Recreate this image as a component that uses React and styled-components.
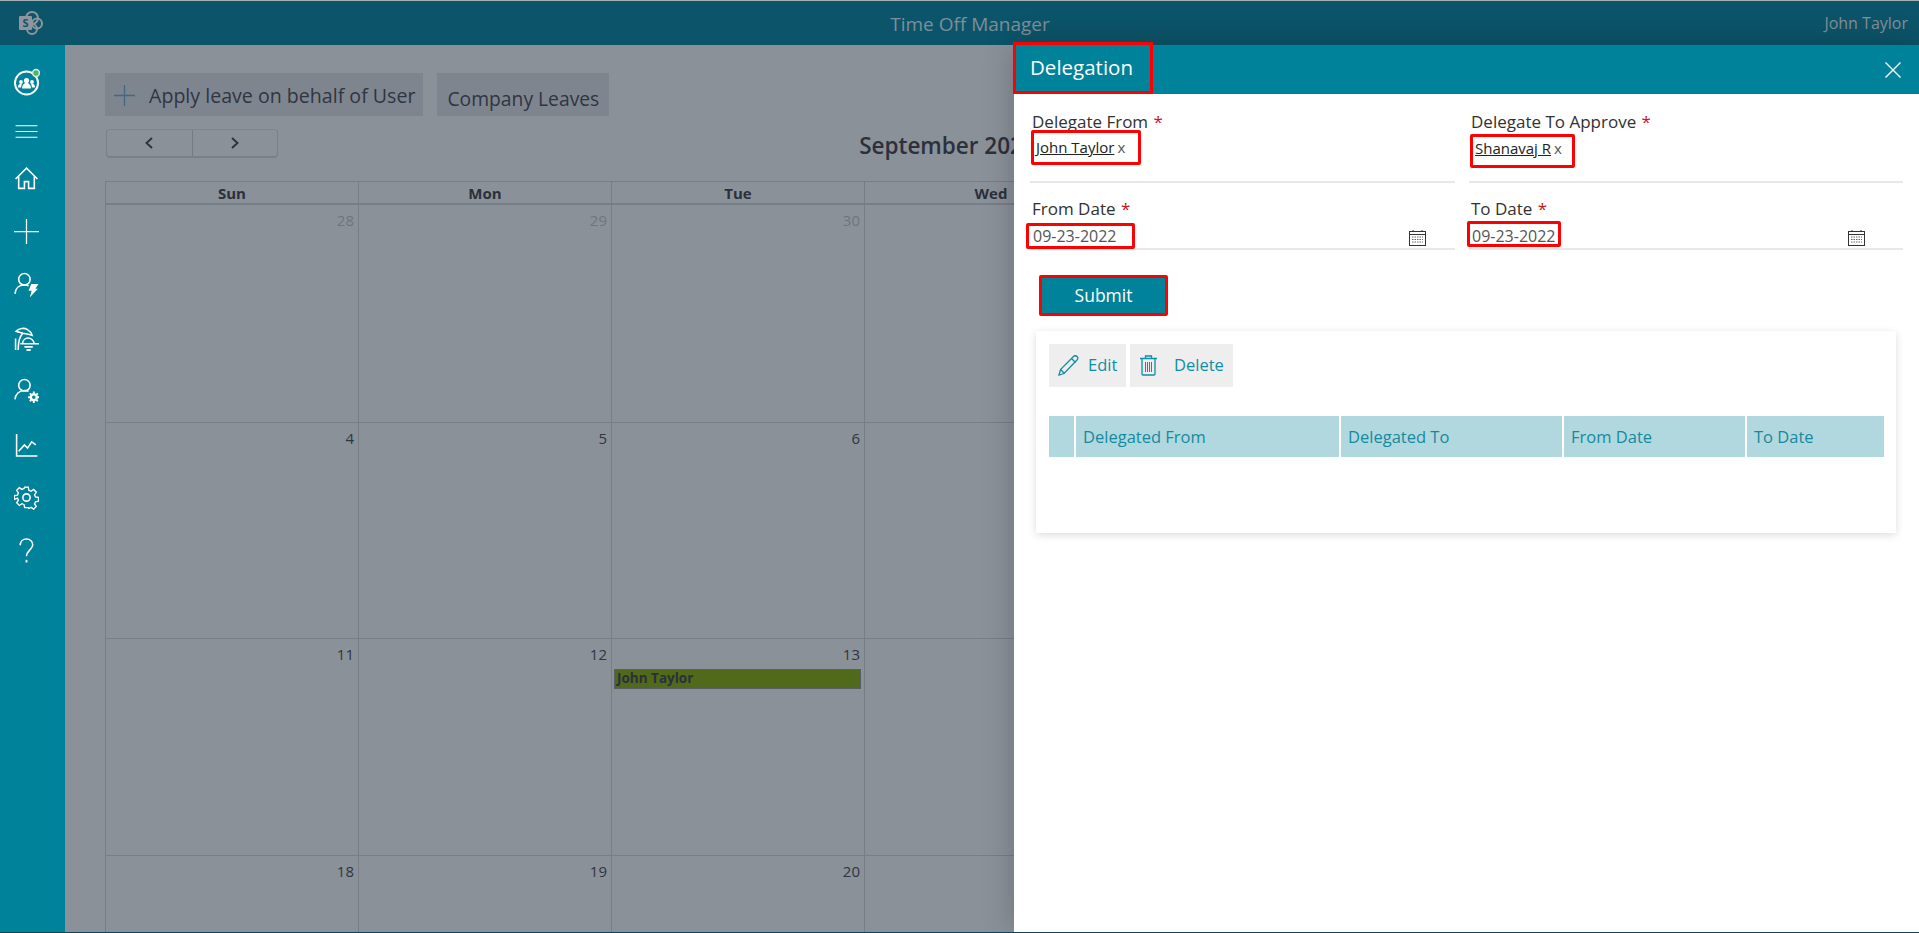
import React from 'react';
import styled, { createGlobalStyle } from 'styled-components';

const GlobalStyle = createGlobalStyle`
  html, body {
    margin: 0;
    padding: 0;
    height: 100%;
    overflow: hidden;
    background: #8b9199;
    font-family: 'Open Sans', 'Noto Sans', 'Liberation Sans', sans-serif;
  }
  * { box-sizing: border-box; }
`;

const Shell = styled.div`
  position: relative;
  height: 933px;
  display: flex;
  flex-direction: column;
  overflow: hidden;
  border-top: 1px solid #9fb1b4;
  border-bottom: 1px solid #0b4352;
`;

const TopBar = styled.header`
  flex: 0 0 44px;
  display: grid;
  grid-template-columns: 1fr auto 1fr;
  align-items: center;
  background: #0c5469;
  padding: 0 11px 0 18px;
`;

const AppTitle = styled.div`
  margin: 1px 0 0 14px;
  font-size: 19px;
  color: #7d8f99;
`;

const UserName = styled.div`
  justify-self: end;
  font-size: 16px;
  color: #858f98;
`;

const Body = styled.div`
  flex: 1;
  display: flex;
  min-height: 0;
`;

const SideNav = styled.nav`
  flex: 0 0 65px;
  display: flex;
  flex-direction: column;
  align-items: center;
  padding: 17px 12px 0 0;
  background: #00829a;
`;

const NavItem = styled.div`
  flex: 0 0 40px;
  margin-top: ${(p) => p.$gap}px;
  display: flex;
  align-items: center;
  justify-content: center;
`;

const Main = styled.main`
  flex: 1;
  min-width: 0;
  padding: 28px 0 0 40px;
  color: #2b303c;
`;

const Toolbar = styled.div`
  display: flex;
  gap: 14px;
`;

const ToolButton = styled.div`
  height: 43px;
  display: flex;
  align-items: center;
  padding: ${(p) => (p.$icon ? '2px 8px 0 9px' : '7px 10px 0 10px')};
  gap: 14px;
  background: #7f858f;
  font-size: ${(p) => (p.$icon ? 19.6 : 19.3)}px;
  color: #2f3542;
  white-space: nowrap;
`;

const NavRow = styled.div`
  width: 1685px;
  height: 29px;
  margin-top: 13px;
  display: grid;
  grid-template-columns: 1fr auto 1fr;
  align-items: start;
`;

const Pager = styled.div`
  width: 172px;
  height: 29px;
  margin-left: 1px;
  display: flex;
  border: 1px solid #7a808a;
  border-bottom-width: 2px;
  border-top-color: #80868f;
  border-radius: 4px;
`;

const PagerCell = styled.div`
  flex: 1;
  display: flex;
  align-items: center;
  justify-content: center;
  & + & { border-left: 1px solid #757b85; }
`;

const MonthTitle = styled.div`
  font-size: 22.5px;
  font-weight: 600;
  line-height: 34px;
  color: #2b303c;
  white-space: nowrap;
`;

const Calendar = styled.div`
  width: 1771px;
  margin-top: 23px;
  border-top: 1px solid #777e87;
  border-left: 1px solid #777e87;
`;

const HeadRow = styled.div`
  display: grid;
  grid-template-columns: repeat(7, 253px);
  height: 23px;
  border-bottom: 2px solid #777e87;
`;

const HeadCell = styled.div`
  border-right: 1px solid #777e87;
  text-align: center;
  font-size: 15px;
  font-weight: 700;
  line-height: 23px;
  color: #2b303c;
`;

const WeekRow = styled.div`
  display: grid;
  grid-template-columns: repeat(7, 253px);
  height: ${(p) => p.$height}px;
  border-bottom: 1px solid #777e87;
`;

const DayCell = styled.div`
  border-right: 1px solid #777e87;
  padding: 6px 3px 0 2px;
`;

const DayNumber = styled.div`
  text-align: right;
  padding-right: 1px;
  font-size: 15px;
  line-height: 18px;
  color: ${(p) => (p.$muted ? '#6f757e' : '#2f3542')};
`;

const LeaveEvent = styled.div`
  height: 20px;
  margin-top: 6px;
  padding-left: 2px;
  background: #50691a;
  border: 1px solid #565f63;
  font-size: 13.5px;
  font-weight: 700;
  line-height: 17px;
  color: #2b303c;
`;

const Panel = styled.aside`
  position: absolute;
  top: 44px;
  right: 0;
  bottom: 0;
  width: 905px;
  background: #fff;
  box-shadow: 0 0 30px rgba(0, 0, 0, 0.22);
`;

const PanelHeader = styled.div`
  height: 49px;
  display: flex;
  align-items: center;
  justify-content: space-between;
  background: #00829a;
  padding-right: 18px;
`;

const PanelTitle = styled.div`
  height: 52px;
  width: 140px;
  margin: -3px 0 0 -1px;
  padding: 0 0 2px 14px;
  display: flex;
  align-items: center;
  border: 3px solid #f00;
  font-size: 20.5px;
  color: #fff;
`;

const FormGrid = styled.div`
  display: grid;
  grid-template-columns: 425px 434px;
  column-gap: 14px;
  padding: 17px 0 0 16px;
`;

const Field = styled.div`
  min-width: 0;
`;

const Label = styled.div`
  margin-top: ${(p) => p.$top || 0}px;
  padding-left: 2px;
  font-size: 17px;
  line-height: 22px;
  color: #323130;
  span { margin-left: 1px; color: #c81414; }
`;

const PickerBox = styled.div`
  height: ${(p) => p.$height}px;
  border-bottom: 2px solid #e8e8e8;
  display: flex;
  align-items: flex-start;
  justify-content: space-between;
`;

const Highlight = styled.div`
  border: 3px solid #f00;
  border-radius: 2px;
  width: ${(p) => p.$w}px;
  height: ${(p) => p.$h}px;
  margin: ${(p) => p.$m};
  padding-left: ${(p) => p.$pl}px;
  font-size: ${(p) => p.$fs || 15}px;
  line-height: ${(p) => p.$lh}px;
  color: #555;
  white-space: nowrap;
`;

const PersonName = styled.span`
  text-decoration: underline;
  margin-right: 3px;
  color: #222;
`;

const CalendarGlyph = styled.div`
  margin: ${(p) => p.$m};
  display: flex;
`;

const SubmitWrap = styled.div`
  width: 129px;
  height: 41px;
  margin: 25px 0 0 25px;
  padding-bottom: 2px;
  border: 3px solid #f00;
  border-radius: 2px;
  background: #00829a;
  color: #fff;
  font-size: 17.5px;
  display: flex;
  align-items: center;
  justify-content: center;
`;

const Card = styled.div`
  width: 860px;
  height: 202px;
  margin: 15px 0 0 22px;
  padding: 13px 12px 0 13px;
  background: #fff;
  box-shadow: 0 2px 8px rgba(0, 0, 0, 0.14);
`;

const ActionRow = styled.div`
  display: flex;
  gap: 4px;
`;

const ActionButton = styled.div`
  width: ${(p) => p.$w}px;
  height: 43px;
  display: flex;
  align-items: center;
  gap: ${(p) => p.$gap}px;
  padding-left: ${(p) => p.$pl}px;
  background: #eee;
  color: #0f8ea6;
  font-size: 16.5px;
`;

const ActionLabel = styled.span`
  margin-top: -2px;
`;

const TableHead = styled.div`
  display: grid;
  grid-template-columns: 25px 263px 221px 181px 137px;
  column-gap: 2px;
  margin-top: 29px;
`;

const TableCell = styled.div`
  height: 41px;
  padding-left: 7px;
  background: #b2d8df;
  color: #158a9e;
  font-size: 16.5px;
  line-height: 41px;
`;

const Line = ({ size = 25, children, ...rest }) => (
  <svg width={size} height={size} viewBox="0 0 24 24" fill="none" stroke="#fff" strokeWidth="1.5" {...rest}>
    {children}
  </svg>
);

const SharePointLogo = () => (
  <svg width="26" height="26" viewBox="0 0 26 26">
    <circle cx="14" cy="8" r="6" fill="none" stroke="#8f959d" strokeWidth="2" />
    <circle cx="19" cy="13.5" r="5" fill="none" stroke="#8f959d" strokeWidth="2" />
    <circle cx="14" cy="19" r="5" fill="none" stroke="#8f959d" strokeWidth="2" />
    <rect x="1" y="6" width="13" height="14" rx="1" fill="#8f959d" />
    <text x="7.5" y="17" textAnchor="middle" fontSize="11" fontWeight="700" fontFamily="Open Sans" fill="#0c5469">S</text>
  </svg>
);

const TeamLogo = () => (
  <svg width="28" height="28" viewBox="0 0 28 28">
    <circle cx="13.5" cy="15" r="11.5" fill="none" stroke="#fff" strokeWidth="2" />
    <circle cx="13.5" cy="12.5" r="2.6" fill="#fff" />
    <path d="M9 20.500c0-3.500 2-5.500 4.500-5.500s4.500 2 4.500 5.500z" fill="#fff" />
    <circle cx="8" cy="14" r="1.900" fill="#fff" />
    <path d="M4.800 19.500c0-2.500 1.300-3.800 3.200-3.800l.8.200-.8 3.600z" fill="#fff" />
    <circle cx="19" cy="14" r="1.900" fill="#fff" />
    <path d="M22.200 19.500c0-2.500-1.300-3.800-3.200-3.800l-.8.200.8 3.600z" fill="#fff" />
    <circle cx="23" cy="5" r="3.400" fill="#4fb56d" stroke="#d6ecd9" strokeWidth="1.500" />
  </svg>
);

const MenuIcon = () => (
  <Line><path d="M1.500 6.500h21M1.500 12h21M1.500 17.500h21" strokeWidth="1" /></Line>
);

const HomeIcon = () => (
  <Line><path d="M1.500 12.500 12 2l10.500 10.500M4.500 10v11.500h5.500V15h4v6.500h5.500V10" /></Line>
);

const PlusIcon = () => (
  <Line><path d="M12 0v24M0 12h24" strokeWidth="1.200" /></Line>
);

const UserBoltIcon = () => (
  <Line>
    <circle cx="10" cy="7" r="5.500" />
    <path d="M1 21c.2-5.500 4-8.500 9-8.500 1.500 0 2.800.2 4 .8" />
    <path d="M16.500 11.500h7l-3 4.500h2.500L15 24.500l2-6.500h-3z" fill="#fff" stroke="none" />
  </Line>
);

const BeachIcon = () => (
  <Line>
    <path d="M2 5c3-3 8-3.500 11-1.500 2.500 1.500 4 4 4.500 5.500-3-1-6-1.500-9-2-1-.5-4-1-6.500-2z" />
    <path d="M8.500 7c-3 3-4.500 8-4.500 16M1.500 23V12" />
    <path d="M8 17c.5-3.500 3-5.500 5.500-5.500s5.500 2 6 5.500zM6 17h18" />
    <path d="M10 20h8M12 23h4" strokeWidth="1.800" />
  </Line>
);

const UserGearIcon = () => (
  <Line>
    <circle cx="10" cy="7" r="5.500" />
    <path d="M1 20.500c.2-5 4-8.500 9-8.500 1.500 0 2.800.2 4 .8" />
    <circle cx="19" cy="18.500" r="2.800" strokeWidth="2.200" />
    <path d="M19 13v2.500M19 21.500V24M13.500 18.500H16M22 18.500h2.500M15.200 14.700l1.700 1.700M21.100 20.600l1.700 1.700M15.200 22.300l1.700-1.700M21.100 16.400l1.700-1.700" strokeWidth="1.800" />
  </Line>
);

const ChartIcon = () => (
  <Line><path d="M2.500 1v21h20M4.500 17.500l5.500-6 3 3 4-6 4 3" /></Line>
);

const GearIcon = () => (
  <svg width="25" height="25" viewBox="0 0 24 24" fill="none" stroke="#fff" strokeWidth="1.500">
    <circle cx="12" cy="12" r="3.500" />
    <path d="M10 1h4l.6 3.300 2.300 1 2.800-1.900 2.900 2.900-1.900 2.800 1 2.300 3.300.6v4l-3.300.6-1 2.300 1.900 2.800-2.900 2.900-2.800-1.900-2.300 1L14 23h-4l-.6-3.300-2.300-1-2.800 1.900-2.900-2.900 1.900-2.800-1-2.300L-1 14v-4l3.300-.6 1-2.300-1.900-2.800 2.900-2.900 2.800 1.900 2.300-1z" transform="translate(1.300 1.300) scale(.89)" />
  </svg>
);

const HelpIcon = () => (
  <Line>
    <path d="M6 7C6 3.500 8.500 1 12 1s6 2.500 6 5.500c0 4.500-6 5.500-6 11" />
    <path d="M12 21v2.500" strokeWidth="1.800" />
  </Line>
);

const Chevron = ({ dir }) => (
  <svg width="12" height="14" viewBox="0 0 12 14" fill="none" stroke="#2b303c" strokeWidth="1.800">
    <path d={dir === 'left' ? 'M9 2 3.500 7 9 12' : 'M3 2l5.500 5L3 12'} />
  </svg>
);

const ThinPlus = () => (
  <svg width="21" height="21" viewBox="0 0 21 21" fill="none" stroke="#3f6a85" strokeWidth="1.300">
    <path d="M10.500 0v21M0 10.500h21" />
  </svg>
);

const CloseIcon = () => (
  <svg width="16" height="16" viewBox="0 0 16 16" fill="none" stroke="#fff" strokeWidth="1.400">
    <path d="M.5.500l15 15M15.500.500l-15 15" />
  </svg>
);

const CalendarIcon = () => (
  <svg width="18" height="16" viewBox="0 0 18 16" fill="none" stroke="#333" strokeWidth="1">
    <rect x=".5" y="1.500" width="16" height="14" />
    <path d="M.5 4.500h16M4 0v2M13 0v2" />
    <path d="M3 7h11M3 9.500h11M3 12h11" strokeDasharray="1.500 1" stroke="#666" />
  </svg>
);

const PencilIcon = () => (
  <svg width="21" height="21" viewBox="0 0 21 21" fill="none" stroke="#0f8ea6" strokeWidth="1.300">
    <path d="M1 20l1.500-5.500L15.500 1.500c1-1 2.500-1 3.500 0s1 2.500 0 3.500L6 18.500z" />
    <path d="M2.500 14.500l4 4M13.500 3.500l4 4" />
  </svg>
);

const TrashIcon = () => (
  <svg width="17" height="21" viewBox="0 0 17 21" fill="none" stroke="#0f8ea6" strokeWidth="1.300">
    <path d="M0 3.500h17M5.500 3.500V1h6v2.500" />
    <path d="M2 3.500v15.500a1 1 0 0 0 1 1h11a1 1 0 0 0 1-1V3.500" />
    <path d="M5.500 7v10M7.500 7v10M9.500 7v10M11.500 7v10" strokeWidth="1" />
  </svg>
);

const navIcons = [
  { Icon: TeamLogo, gap: 0 },
  { Icon: MenuIcon, gap: 9 },
  { Icon: HomeIcon, gap: 7 },
  { Icon: PlusIcon, gap: 13 },
  { Icon: UserBoltIcon, gap: 13 },
  { Icon: BeachIcon, gap: 14 },
  { Icon: UserGearIcon, gap: 12 },
  { Icon: ChartIcon, gap: 15 },
  { Icon: GearIcon, gap: 12 },
  { Icon: HelpIcon, gap: 13 },
];
const dayNames = ['Sun', 'Mon', 'Tue', 'Wed', 'Thu', 'Fri', 'Sat'];
const weeks = [
  { height: 218, days: [28, 29, 30, 31, 1, 2, 3], muted: 3 },
  { height: 216, days: [4, 5, 6, 7, 8, 9, 10], muted: 0 },
  { height: 217, days: [11, 12, 13, 14, 15, 16, 17], muted: 0 },
  { height: 216, days: [18, 19, 20, 21, 22, 23, 24], muted: 0 },
];
const tableColumns = ['', 'Delegated From', 'Delegated To', 'From Date', 'To Date'];

export default function App() {
  return (
    <>
      <GlobalStyle />
      <Shell>
        <TopBar>
          <SharePointLogo />
          <AppTitle>Time Off Manager</AppTitle>
          <UserName>John Taylor</UserName>
        </TopBar>
        <Body>
          <SideNav>
            {navIcons.map(({ Icon, gap }, i) => (
              <NavItem key={i} $gap={gap}><Icon /></NavItem>
            ))}
          </SideNav>
          <Main>
            <Toolbar>
              <ToolButton $icon><ThinPlus />Apply leave on behalf of User</ToolButton>
              <ToolButton>Company Leaves</ToolButton>
            </Toolbar>
            <NavRow>
              <Pager>
                <PagerCell><Chevron dir="left" /></PagerCell>
                <PagerCell><Chevron dir="right" /></PagerCell>
              </Pager>
              <MonthTitle>September 2022</MonthTitle>
            </NavRow>
            <Calendar>
              <HeadRow>
                {dayNames.map((d) => <HeadCell key={d}>{d}</HeadCell>)}
              </HeadRow>
              {weeks.map((w) => (
                <WeekRow key={w.days[0]} $height={w.height}>
                  {w.days.map((d, i) => (
                    <DayCell key={d}>
                      <DayNumber $muted={i < w.muted}>{d}</DayNumber>
                      {d === 13 && <LeaveEvent>John Taylor</LeaveEvent>}
                    </DayCell>
                  ))}
                </WeekRow>
              ))}
            </Calendar>
          </Main>
        </Body>

        <Panel>
          <PanelHeader>
            <PanelTitle>Delegation</PanelTitle>
            <CloseIcon />
          </PanelHeader>
          <FormGrid>
            <Field>
              <Label>Delegate From <span>*</span></Label>
              <PickerBox $height={50}>
                <Highlight $w={110} $h={35} $m="-3px 0 0 1px" $pl={2} $lh={29}>
                  <PersonName>John Taylor</PersonName>x
                </Highlight>
              </PickerBox>
            </Field>
            <Field>
              <Label>Delegate To Approve <span>*</span></Label>
              <PickerBox $height={50}>
                <Highlight $w={105} $h={34} $m="1px 0 0 1px" $pl={2} $lh={22}>
                  <PersonName>Shanavaj R</PersonName>x
                </Highlight>
              </PickerBox>
            </Field>
            <Field>
              <Label $top={15}>From Date <span>*</span></Label>
              <PickerBox $height={30}>
                <Highlight $w={109} $h={26} $m="3px 0 0 -4px" $pl={4} $lh={20} $fs={16}>09-23-2022</Highlight>
                <CalendarGlyph $m="10px 28px 0 0"><CalendarIcon /></CalendarGlyph>
              </PickerBox>
            </Field>
            <Field>
              <Label $top={15}>To Date <span>*</span></Label>
              <PickerBox $height={30}>
                <Highlight $w={94} $h={26} $m="1px 0 0 -2px" $pl={2} $lh={24} $fs={16}>09-23-2022</Highlight>
                <CalendarGlyph $m="10px 37px 0 0"><CalendarIcon /></CalendarGlyph>
              </PickerBox>
            </Field>
          </FormGrid>
          <SubmitWrap>Submit</SubmitWrap>
          <Card>
            <ActionRow>
              <ActionButton $w={77} $pl={9} $gap={9}><PencilIcon /><ActionLabel>Edit</ActionLabel></ActionButton>
              <ActionButton $w={103} $pl={10} $gap={17}><TrashIcon /><ActionLabel>Delete</ActionLabel></ActionButton>
            </ActionRow>
            <TableHead>
              {tableColumns.map((c, i) => <TableCell key={i}>{c}</TableCell>)}
            </TableHead>
          </Card>
        </Panel>
      </Shell>
    </>
  );
}
